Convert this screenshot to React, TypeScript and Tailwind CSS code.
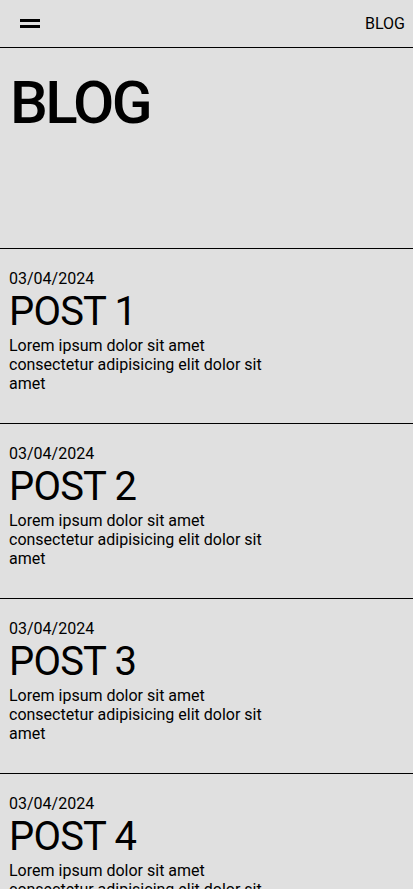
export default function App() {
  const posts = [1, 2, 3, 4];
  return (
    <div className="min-h-screen bg-[#e0e0e0] text-black" style={{ fontFamily: "Roboto, 'Noto Sans', sans-serif" }}>
      <header className="flex h-[48px] items-center justify-between border-b border-black pl-5 pr-2">
        <div className="flex flex-col gap-[3px]">
          <span className="block h-[3px] w-5 bg-black" />
          <span className="block h-[3px] w-5 bg-black" />
        </div>
        <span className="text-base leading-[normal]">BLOG</span>
      </header>
      <section className="h-[201px] border-b border-black px-[10px] pt-[19px]">
        <h1 className="text-[60px] font-medium leading-[normal] tracking-[-0.045em]">BLOG</h1>
      </section>
      {posts.map((n) => (
        <article key={n} className="h-[175px] border-b border-black pl-[9px] pr-[10px] pt-[20px]">
          <p className="text-base leading-[normal]">03/04/2024</p>
          <h2 className="text-[40px] font-normal leading-[normal] tracking-[-0.02em]">POST {n}</h2>
          <p className="mt-[1px] w-[65%] text-base leading-[normal]">
            Lorem ipsum dolor sit amet consectetur adipisicing elit dolor sit amet
          </p>
        </article>
      ))}
    </div>
  );
}
